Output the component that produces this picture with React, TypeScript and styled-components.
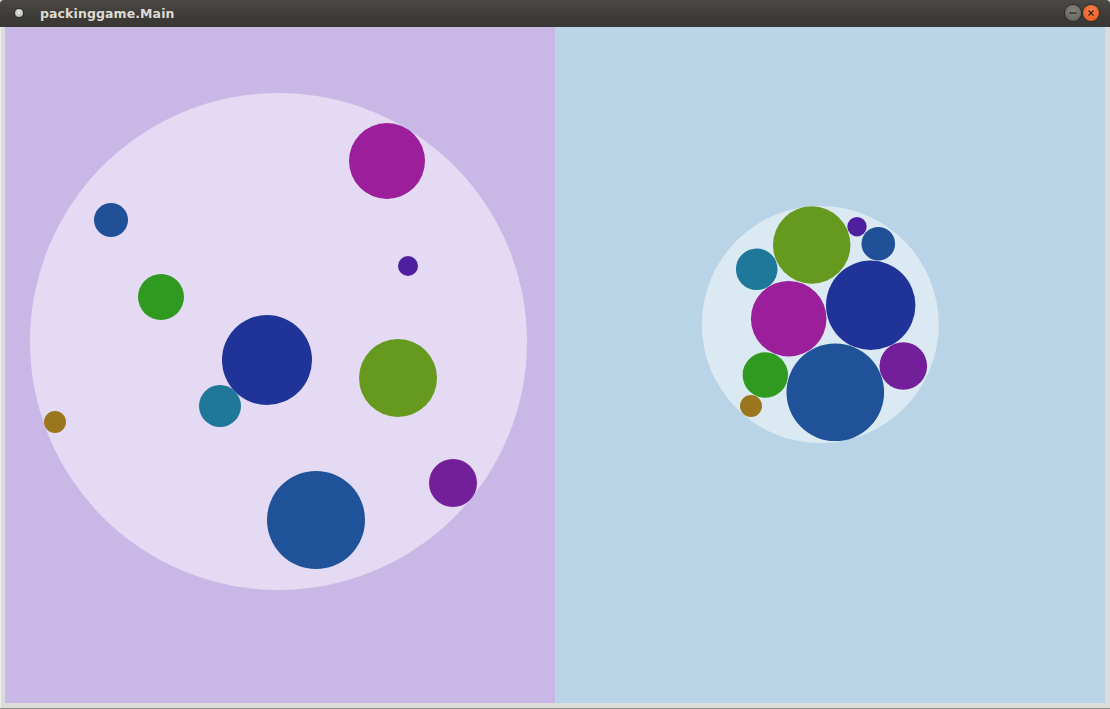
import React from "react";
import styled, { createGlobalStyle } from "styled-components";

const Global = createGlobalStyle`
  html, body { margin: 0; padding: 0; background: #3c3b37; }
  body { width: 1110px; height: 709px; overflow: hidden; }
`;

const Window = styled.div`
  width: 1110px;
  height: 709px;
  display: flex;
  flex-direction: column;
  background: #dcdcdc;
  border-bottom: 1px solid #8e8c88;
  box-sizing: border-box;
`;

const TitleBar = styled.div`
  height: 27px;
  flex: none;
  display: flex;
  align-items: center;
  padding: 0 11px 1px 15px;
  box-sizing: border-box;
  background: linear-gradient(#4a4944, #3c3b37 60%, #393834);
  border-radius: 4px 4px 0 0;
`;

const AppIcon = styled.div`
  width: 8px;
  height: 8px;
  border-radius: 50%;
  background: radial-gradient(circle at 50% 40%, #e8e8e8, #a9a9a9);
  box-shadow: 0 0 0 1px #2a2926;
  margin-right: 17px;
`;

const Title = styled.span`
  font-family: "DejaVu Sans", sans-serif;
  font-weight: bold;
  font-size: 12.5px;
  color: #dfdbd2;
  letter-spacing: 0.1px;
  flex: 1;
`;

const WinButton = styled.div<{ $close?: boolean }>`
  width: 16px;
  height: 16px;
  border-radius: 50%;
  margin-left: 2px;
  display: flex;
  align-items: center;
  justify-content: center;
  box-shadow: 0 0 0 1px #2e2d2a;
  background: ${(p) =>
    p.$close
      ? "radial-gradient(circle at 50% 35%, #f8824a, #e4541b)"
      : "radial-gradient(circle at 50% 35%, #86847f, #5e5d58)"};
`;

const Frame = styled.div`
  flex: 1;
  display: flex;
  padding: 0 5px 5px 4px;
  border-left: 1px solid #f0f0f0;
  box-sizing: border-box;
`;

const Panel = styled.div<{ $bg: string }>`
  width: 550px;
  height: 676px;
  background: ${(p) => p.$bg};
  flex: none;
`;

type C = { x: number; y: number; r: number; c: string };

const colors = {
  magenta: "#9b1f9b",
  blue: "#1f5098",
  violet: "#4f1fa0",
  green: "#309a20",
  navy: "#1f3398",
  olive: "#659a1f",
  teal: "#1f779a",
  brown: "#9a771f",
  purple: "#731f9a",
  bigblue: "#1f5298",
};

const leftCircles: C[] = [
  { x: 387, y: 161, r: 38, c: colors.magenta },
  { x: 111, y: 220, r: 17, c: colors.blue },
  { x: 408, y: 266, r: 10, c: colors.violet },
  { x: 161, y: 297, r: 23, c: colors.green },
  { x: 267, y: 360, r: 45, c: colors.navy },
  { x: 398, y: 378, r: 39, c: colors.olive },
  { x: 220, y: 406, r: 21, c: colors.teal },
  { x: 55, y: 422, r: 11, c: colors.brown },
  { x: 453, y: 483, r: 24, c: colors.purple },
  { x: 316, y: 520, r: 49, c: colors.bigblue },
];

const rightCircles: C[] = [
  { x: 811.7, y: 245, r: 38.7, c: colors.olive },
  { x: 857, y: 226.7, r: 9.7, c: colors.violet },
  { x: 878.3, y: 243.7, r: 16.8, c: colors.blue },
  { x: 756.7, y: 269.3, r: 20.8, c: colors.teal },
  { x: 788.7, y: 318.7, r: 37.8, c: colors.magenta },
  { x: 870.7, y: 305.3, r: 44.7, c: colors.navy },
  { x: 903.3, y: 366, r: 23.8, c: colors.purple },
  { x: 765.3, y: 375, r: 22.7, c: colors.green },
  { x: 751, y: 406, r: 11, c: colors.brown },
  { x: 835.3, y: 392.3, r: 48.8, c: colors.bigblue },
];

const Board: React.FC<{
  ox: number;
  oy: number;
  bg: string;
  container: { x: number; y: number; r: number; c: string };
  circles: C[];
}> = ({ ox, oy, bg, container, circles }) => (
  <Panel $bg={bg}>
    <svg width="550" height="676" viewBox="0 0 550 676" style={{ display: "block" }}>
      <circle cx={container.x - ox} cy={container.y - oy} r={container.r} fill={container.c} />
      {circles.map((c, i) => (
        <circle key={i} cx={c.x - ox} cy={c.y - oy} r={c.r} fill={c.c} />
      ))}
    </svg>
  </Panel>
);

export default function App() {
  return (
    <>
      <Global />
      <Window>
        <TitleBar>
          <AppIcon />
          <Title>packinggame.Main</Title>
          <WinButton>
            <svg width="10" height="10" viewBox="0 0 10 10">
              <line x1="1.5" y1="5" x2="8.5" y2="5" stroke="#2f2e2b" strokeWidth="1.4" />
            </svg>
          </WinButton>
          <WinButton $close>
            <svg width="10" height="10" viewBox="0 0 10 10">
              <path d="M2.5 2.5 L7.5 7.5 M7.5 2.5 L2.5 7.5" stroke="#3a2114" strokeWidth="1.3" />
            </svg>
          </WinButton>
        </TitleBar>
        <Frame>
          <Board
            ox={5}
            oy={27}
            bg="#c9b8e6"
            container={{ x: 278.5, y: 341.5, r: 248.5, c: "#e5daf3" }}
            circles={leftCircles}
          />
          <Board
            ox={555}
            oy={27}
            bg="#bad4e7"
            container={{ x: 820.3, y: 324.5, r: 118.5, c: "#dbe9f3" }}
            circles={rightCircles}
          />
        </Frame>
      </Window>
    </>
  );
}
